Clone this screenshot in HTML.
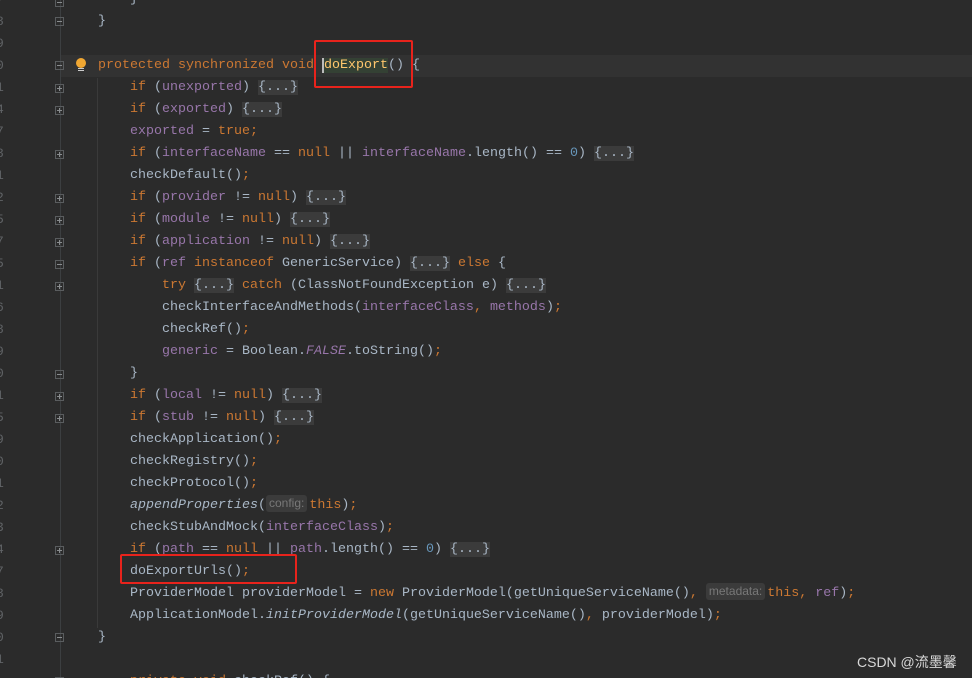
<!DOCTYPE html>
<html><head><meta charset="utf-8"><style>
html,body{margin:0;width:972px;height:678px;overflow:hidden;}
body{background:#2b2b2b;position:relative;font-family:"Liberation Mono",monospace;}
#w{position:absolute;left:0;top:2px;width:972px;height:678px;}
.r{position:absolute;left:98px;height:22px;line-height:22px;font-size:13.33px;color:#a9b7c6;white-space:pre;}
.ln{position:absolute;left:-4px;height:22px;line-height:22px;font-size:13px;color:#606366;}
.k{color:#cc7832}.f{color:#9876aa}.n{color:#6897bb}.i{font-style:italic}
.fd{background:#3b3b3b;color:#a9b7c6;}
.h{display:inline-block;line-height:17px;vertical-align:1px;background:#3b3b3b;color:#787878;font-family:"Liberation Sans",sans-serif;font-size:12px;border-radius:3px;padding:0 3px;margin-right:2px}
.fb{position:absolute;left:55px;width:9px;height:9px;border:1px solid #5a5d5f;box-sizing:border-box;}
.fb:after{content:"";position:absolute;left:1px;top:3px;width:5px;height:1px;background:#8a8d8f}
.fb.p:before{content:"";position:absolute;left:3px;top:1px;width:1px;height:5px;background:#8a8d8f}
.box{position:absolute;border:2px solid #e8231c;border-radius:2px;}
</style></head><body>
<div id="w">
<div style="position:absolute;left:60px;top:53px;width:912px;height:22px;background:#323232"></div>
<div style="position:absolute;left:60px;top:-2px;width:1px;height:678px;background:#3c3f41"></div>
<div style="position:absolute;left:97px;top:76px;width:1px;height:550px;background:#3a3a3a"></div>
<div style="position:absolute;left:76px;top:56px;width:10px;height:10px;border-radius:50%;background:#f0a732"></div>
<div style="position:absolute;left:78px;top:66px;width:6px;height:1px;background:#ccc"></div>
<div style="position:absolute;left:78px;top:68px;width:6px;height:1px;background:#ccc"></div>

<div class="ln" style="top:-13px">7</div><div class="ln" style="top:9px">8</div><div class="ln" style="top:31px">9</div><div class="ln" style="top:53px">0</div><div class="ln" style="top:75px">1</div><div class="ln" style="top:97px">4</div><div class="ln" style="top:119px">7</div><div class="ln" style="top:141px">8</div><div class="ln" style="top:163px">1</div><div class="ln" style="top:185px">2</div><div class="ln" style="top:207px">5</div><div class="ln" style="top:229px">7</div><div class="ln" style="top:251px">5</div><div class="ln" style="top:273px">1</div><div class="ln" style="top:295px">6</div><div class="ln" style="top:317px">8</div><div class="ln" style="top:339px">9</div><div class="ln" style="top:361px">0</div><div class="ln" style="top:383px">1</div><div class="ln" style="top:405px">5</div><div class="ln" style="top:427px">9</div><div class="ln" style="top:449px">0</div><div class="ln" style="top:471px">1</div><div class="ln" style="top:493px">2</div><div class="ln" style="top:515px">3</div><div class="ln" style="top:537px">4</div><div class="ln" style="top:559px">7</div><div class="ln" style="top:581px">8</div><div class="ln" style="top:603px">9</div><div class="ln" style="top:625px">0</div><div class="ln" style="top:647px">1</div>

<div class="fb" style="top:-4px"></div><div class="fb" style="top:15px"></div><div class="fb" style="top:59px"></div>
<div class="fb p" style="top:82px"></div><div class="fb p" style="top:104px"></div><div class="fb p" style="top:148px"></div><div class="fb p" style="top:192px"></div><div class="fb p" style="top:214px"></div><div class="fb p" style="top:236px"></div><div class="fb" style="top:258px"></div><div class="fb p" style="top:280px"></div><div class="fb" style="top:368px"></div><div class="fb p" style="top:390px"></div><div class="fb p" style="top:412px"></div><div class="fb p" style="top:544px"></div><div class="fb" style="top:631px"></div><div class="fb" style="top:675px"></div>

<div class="r" style="top:-13px">    }</div>
<div class="r" style="top:9px">}</div>
<div class="r" style="top:53px"><span class="k">protected synchronized void </span><span style="background:#344134;color:#ffc66d;border-left:2px solid #bbb">doExport</span>() {</div>
<div class="r" style="top:75px">    <span class="k">if </span>(<span class="f">unexported</span>) <span class="fd">{...}</span></div>
<div class="r" style="top:97px">    <span class="k">if </span>(<span class="f">exported</span>) <span class="fd">{...}</span></div>
<div class="r" style="top:119px">    <span class="f">exported </span>= <span class="k">true;</span></div>
<div class="r" style="top:141px">    <span class="k">if </span>(<span class="f">interfaceName </span>== <span class="k">null </span>|| <span class="f">interfaceName</span>.length() == <span class="n">0</span>) <span class="fd">{...}</span></div>
<div class="r" style="top:163px">    checkDefault()<span class="k">;</span></div>
<div class="r" style="top:185px">    <span class="k">if </span>(<span class="f">provider </span>!= <span class="k">null</span>) <span class="fd">{...}</span></div>
<div class="r" style="top:207px">    <span class="k">if </span>(<span class="f">module </span>!= <span class="k">null</span>) <span class="fd">{...}</span></div>
<div class="r" style="top:229px">    <span class="k">if </span>(<span class="f">application </span>!= <span class="k">null</span>) <span class="fd">{...}</span></div>
<div class="r" style="top:251px">    <span class="k">if </span>(<span class="f">ref </span><span class="k">instanceof </span>GenericService) <span class="fd">{...}</span> <span class="k">else </span>{</div>
<div class="r" style="top:273px">        <span class="k">try </span><span class="fd">{...}</span> <span class="k">catch </span>(ClassNotFoundException e) <span class="fd">{...}</span></div>
<div class="r" style="top:295px">        checkInterfaceAndMethods(<span class="f">interfaceClass</span><span class="k">, </span><span class="f">methods</span>)<span class="k">;</span></div>
<div class="r" style="top:317px">        checkRef()<span class="k">;</span></div>
<div class="r" style="top:339px">        <span class="f">generic </span>= Boolean.<span class="f i">FALSE</span>.toString()<span class="k">;</span></div>
<div class="r" style="top:361px">    }</div>
<div class="r" style="top:383px">    <span class="k">if </span>(<span class="f">local </span>!= <span class="k">null</span>) <span class="fd">{...}</span></div>
<div class="r" style="top:405px">    <span class="k">if </span>(<span class="f">stub </span>!= <span class="k">null</span>) <span class="fd">{...}</span></div>
<div class="r" style="top:427px">    checkApplication()<span class="k">;</span></div>
<div class="r" style="top:449px">    checkRegistry()<span class="k">;</span></div>
<div class="r" style="top:471px">    checkProtocol()<span class="k">;</span></div>
<div class="r" style="top:493px">    <span class="i">appendProperties</span>(<span class="h">config:</span><span class="k">this</span>)<span class="k">;</span></div>
<div class="r" style="top:515px">    checkStubAndMock(<span class="f">interfaceClass</span>)<span class="k">;</span></div>
<div class="r" style="top:537px">    <span class="k">if </span>(<span class="f">path </span>== <span class="k">null </span>|| <span class="f">path</span>.length() == <span class="n">0</span>) <span class="fd">{...}</span></div>
<div class="r" style="top:559px">    doExportUrls()<span class="k">;</span></div>
<div class="r" style="top:581px">    ProviderModel providerModel = <span class="k">new </span>ProviderModel(getUniqueServiceName()<span class="k">, </span><span class="h">metadata:</span><span class="k">this, </span><span class="f">ref</span>)<span class="k">;</span></div>
<div class="r" style="top:603px">    ApplicationModel.<span class="i">initProviderModel</span>(getUniqueServiceName()<span class="k">, </span>providerModel)<span class="k">;</span></div>
<div class="r" style="top:625px">}</div>
<div class="r" style="top:669px">    <span class="k">private void </span>checkRef() {</div>

<div class="box" style="left:314px;top:38px;width:95px;height:44px"></div>
<div class="box" style="left:120px;top:552px;width:173px;height:26px"></div>
</div>
<div style="position:absolute;left:857px;top:652px;font-family:'Liberation Sans','Noto Sans CJK SC',sans-serif;font-size:14px;color:#d8d8d8;white-space:nowrap">CSDN @流墨馨</div>
</body></html>
